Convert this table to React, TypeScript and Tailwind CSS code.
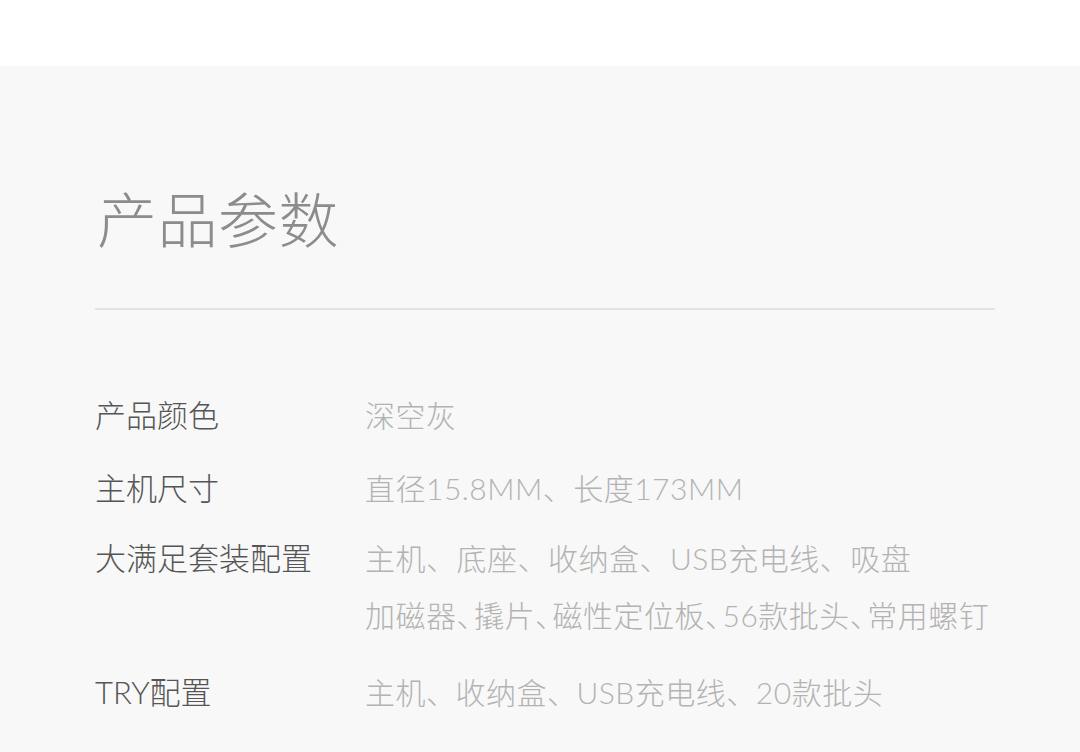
const rows: { label: string; lines: string[][]; sep: string; mt: string }[] = [
  { label: "产品颜色", lines: [["深空灰"]], sep: "", mt: "mt-0" },
  { label: "主机尺寸", lines: [["直径15.8MM、长度173MM"]], sep: "", mt: "mt-[16px]" },
  {
    label: "大满足套装配置",
    lines: [
      ["主机、底座、收纳盒、USB充电线、吸盘"],
      ["加磁器", "撬片", "磁性定位板", "56款批头", "常用螺钉"],
    ],
    sep: "-mr-[13px]",
    mt: "mt-[13px]",
  },
  { label: "TRY配置", lines: [["主机", "收纳盒", "USB充电线", "20款批头"]], sep: "-mr-[1px]", mt: "mt-[20px]" },
];

// pieces joined with a 、 that can be narrowed
const Line = ({ parts, sep }: { parts: string[]; sep: string }) => (
  <span className="whitespace-nowrap">
    {parts.map((p, i) => (
      <span key={i}>
        {i > 0 && <span className={sep}>、</span>}
        {p}
      </span>
    ))}
  </span>
);

export default function App() {
  return (
    <div
      className="w-[1080px] h-[752px] overflow-hidden bg-white"
      style={{ fontFamily: 'Lato, "Noto Sans CJK SC", "Noto Sans", sans-serif' }}
    >
      <div className="h-[66px] bg-white" />
      <div className="h-[686px] bg-[#f8f8f8] pl-[95px]">
        <div className="w-[900px]">
          <h1 className="pt-[118px] pl-[2px] text-[60px] leading-[72px] font-light tracking-[0.5px] text-[#8c8c8c]">
            产品参数
          </h1>
          <div className="mt-[52px] h-[2px] bg-[#e3e3e3]" />

          <div className="mt-[77px] flex flex-col">
            {rows.map((r) => (
              <div key={r.label} className={`flex ${r.mt}`}>
                <div className="w-[270px] shrink-0 text-[31px] leading-[57px] font-light text-[#555555] whitespace-nowrap">
                  {r.label}
                </div>
                <div className="flex flex-col text-[30px] leading-[57px] font-light tracking-[0.5px] text-[#b3b3b3]">
                  {r.lines.map((l, i) => (
                    <Line key={i} parts={l} sep={r.sep} />
                  ))}
                </div>
              </div>
            ))}
          </div>
        </div>
      </div>
    </div>
  );
}
